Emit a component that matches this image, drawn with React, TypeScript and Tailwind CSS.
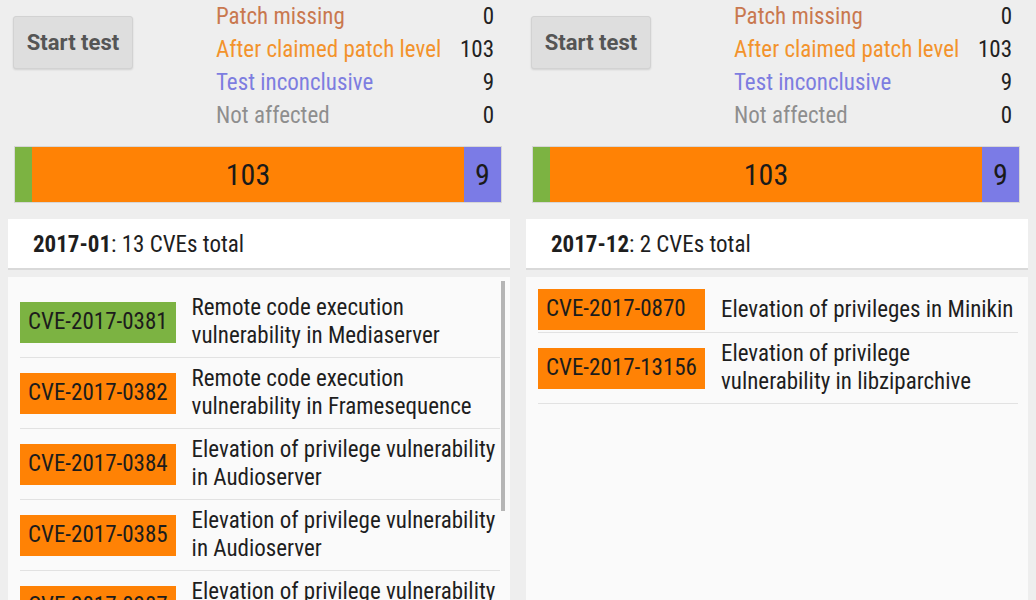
import React from 'react'

type Row = { id: string; ok?: boolean; text: string }

const STATS = [
  { label: 'Patch missing', value: 0, color: 'text-[#c9784f]' },
  { label: 'After claimed patch level', value: 103, color: 'text-[#f3932c]' },
  { label: 'Test inconclusive', value: 9, color: 'text-[#7d7de0]' },
  { label: 'Not affected', value: 0, color: 'text-[#8e8e8e]' },
]

const LEFT_ROWS: Row[] = [
  { id: 'CVE-2017-0381', ok: true, text: 'Remote code execution vulnerability in Mediaserver' },
  { id: 'CVE-2017-0382', text: 'Remote code execution vulnerability in Framesequence' },
  { id: 'CVE-2017-0384', text: 'Elevation of privilege vulnerability in Audioserver' },
  { id: 'CVE-2017-0385', text: 'Elevation of privilege vulnerability in Audioserver' },
  { id: 'CVE-2017-0387', text: 'Elevation of privilege vulnerability in Audioserver' },
]

const RIGHT_ROWS: Row[] = [
  { id: 'CVE-2017-0870', text: 'Elevation of privileges in Minikin' },
  { id: 'CVE-2017-13156', text: 'Elevation of privilege vulnerability in libziparchive' },
]

function Panel({ month, total, rows, scroll }: { month: string; total: string; rows: Row[]; scroll?: boolean }) {
  return (
    <div className="flex h-full w-[518px] shrink-0 flex-col">
      {/* Start button + stats */}
      <div className="flex shrink-0">
        <button
          className="ml-[13px] mt-[16px] h-[53px] w-[120px] rounded-[3px] border border-[#d2d2d2] bg-[#dedede] text-[22px] font-bold text-[#555] shadow-[0_1px_2px_rgba(0,0,0,0.12)] font-stretch-normal"
          style={{ fontFamily: 'Roboto, sans-serif' }}
        >
          Start test
        </button>
        <div className="ml-[83px] grid w-[278px] grid-cols-[1fr_auto] text-[23px] leading-[33px]">
          {STATS.map((s) => (
            <React.Fragment key={s.label}>
              <span className={s.color}>{s.label}</span>
              <span className="text-right text-[#222]">{s.value}</span>
            </React.Fragment>
          ))}
        </div>
      </div>

      {/* Bar */}
      <div className="ml-[14px] mt-[14px] flex h-[57px] w-[488px] shrink-0 border border-[#d6d6d6] text-[30px] text-[#1a1a1a]">
        <div className="w-[17px] bg-[#7cb342]" />
        <div className="flex flex-1 items-center justify-center bg-[#ff8205]">103</div>
        <div className="flex w-[37px] items-center justify-center bg-[#7b7be6]">9</div>
      </div>

      {/* Header */}
      <div className="mx-2 mt-[16px] flex h-[51px] shrink-0 items-center border-b-2 border-[#d9d9d9] bg-white pl-[25px] pt-[3px] text-[23px] text-[#1e1e1e]">
        <b>{month}</b>: {total}
      </div>

      {/* List */}
      <div className="relative mx-2 mt-[7px] min-h-0 flex-1 overflow-hidden bg-[#fafafa] pl-3 pr-[10px] pt-[10px]">
        <div className="grid grid-cols-[auto_1fr]">
          {rows.map((r) => (
            <React.Fragment key={r.id}>
              <div className="flex items-center border-b border-[#e2e2e2] py-[2px]">
                <span
                  className={`flex h-[41px] w-full items-center px-2 text-[23px] text-[#1c1c1c] ${
                    r.ok ? 'bg-[#7cb342]' : 'bg-[#ff8205]'
                  }`}
                >
                  {r.id}
                </span>
              </div>
              <div className="flex items-center border-b border-[#e2e2e2] py-[7px] pl-4 text-[23px] leading-[28px] text-[#1e1e1e]">
                {r.text}
              </div>
            </React.Fragment>
          ))}
        </div>
        {scroll && <div className="absolute right-[5px] top-[4px] h-[230px] w-[4px] bg-[#b5b5b5]" />}
      </div>
    </div>
  )
}

export default function App() {
  return (
    <div
      className="flex h-[600px] w-[1036px] overflow-hidden bg-[#eeeeee] font-stretch-condensed"
      style={{ fontFamily: "'Roboto Condensed', 'Liberation Sans Narrow', Roboto, sans-serif" }}
    >
      <Panel month="2017-01" total="13 CVEs total" rows={LEFT_ROWS} scroll />
      <Panel month="2017-12" total="2 CVEs total" rows={RIGHT_ROWS} />
    </div>
  )
}
